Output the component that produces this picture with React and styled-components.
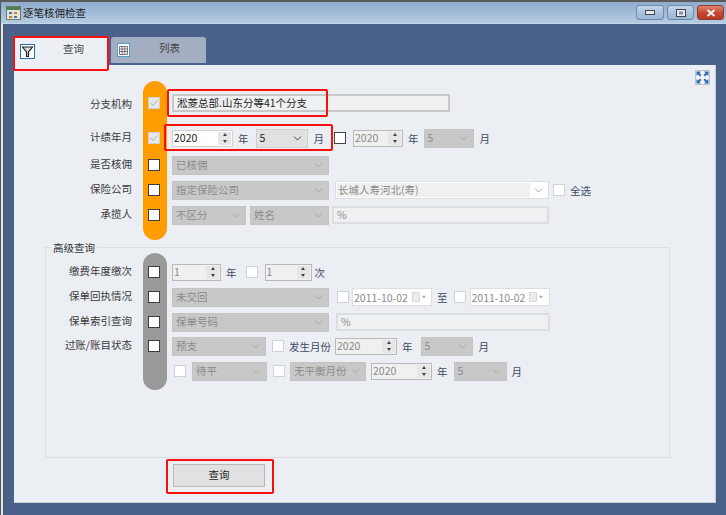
import React from "react";
import styled, { createGlobalStyle } from "styled-components";

const Global = createGlobalStyle`
  html, body { margin: 0; padding: 0; background: #4a628a; }
  * { box-sizing: border-box; }
`;

const Frame = styled.div`
  width: 726px;
  height: 515px;
  display: flex;
  flex-direction: column;
  overflow: hidden;
  position: relative;
  background: #4a628a;
  border-top: 2px solid #5c5c5c;
  border-left: 1px solid #555;
  font-family: "Noto Sans CJK SC", "Liberation Sans", sans-serif;
  font-size: 10.5px;
  color: #333;
`;

const TitleBar = styled.div`
  height: 22px;
  display: flex;
  align-items: center;
  padding: 0 2px 0 5px;
  background: linear-gradient(#8faccc, #b4cbe3);
  border-bottom: 1px solid #c3d6ea;
`;

const TitleText = styled.span`
  margin-left: 2px;
  flex: 1;
  color: #222;
  line-height: 20px;
`;

const WinButton = styled.div`
  width: ${(p) => p.$w}px;
  height: 15px;
  margin-left: 3px;
  display: flex;
  align-items: center;
  justify-content: center;
  border: 1px solid ${(p) => (p.$close ? "#8c3a2c" : "#6f89a8")};
  border-radius: 3px;
  background: ${(p) =>
    p.$close
      ? "linear-gradient(#e0856f, #c8452d 55%, #b63a22)"
      : "linear-gradient(#c4d7ea, #a9c2dc 55%, #9ab6d4)"};
`;

const Body = styled.div`
  flex: 1;
  padding: 13px 10px 12px 11px;
  display: flex;
  flex-direction: column;
  border-left: 2px solid #dfe7ef;
  box-shadow: inset 1px 0 #555;
`;

const TabStrip = styled.div`
  display: flex;
  align-items: flex-start;
  height: 28px;
`;

const Tab = styled.div`
  width: 95px;
  height: ${(p) => (p.$active ? 28 : 26)}px;
  margin-left: ${(p) => (p.$active ? 0 : 2)}px;
  display: flex;
  align-items: center;
  padding: 0 0 0 6px;
  border-radius: 3px 3px 0 0;
  background: ${(p) => (p.$active ? "#ecf0f5" : "#a3aec3")};
  color: #444;
`;

const TabLabel = styled.span`
  margin-left: ${(p) => p.$ml}px;
  margin-top: -5px;
`;

const Panel = styled.div`
  flex: 1;
  position: relative;
  background: #ebeef3;
  border-right: 1px solid #c8ccd4;
  border-bottom: 1px solid #c8ccd4;
  padding-top: 26px;
`;

const ExpandBtn = styled.div`
  position: absolute;
  top: 5px;
  right: 5px;
  width: 15px;
  height: 15px;
  background: #f2f4f8;
  border: 1px solid #c4c4c4;
  display: flex;
  align-items: center;
  justify-content: center;
`;

const Pill = styled.div`
  position: absolute;
  left: 129px;
  top: ${(p) => p.$top}px;
  width: 24px;
  height: ${(p) => p.$h}px;
  border-radius: 12px;
  background: ${(p) => p.$color};
`;

const Mark = styled.div`
  position: absolute;
  left: ${(p) => p.$x - 14}px;
  top: ${(p) => p.$y - 65}px;
  width: ${(p) => p.$w}px;
  height: ${(p) => p.$h}px;
  border: 2px solid #fa0f0f;
  border-radius: 2px;
  pointer-events: none;
  z-index: 3;
`;

const Row = styled.div`
  position: relative;
  z-index: 1;
  display: flex;
  align-items: center;
  height: 24px;
  margin-top: ${(p) => p.$mt || 0}px;
`;

const Label = styled.div`
  width: ${(p) => p.$w || 118}px;
  text-align: right;
  color: #3a3a3a;
  white-space: nowrap;
  margin-top: ${(p) => p.$mt ?? -4}px;
`;

const CheckBox = styled.div`
  flex: none;
  width: 12px;
  height: 12px;
  margin-left: ${(p) => p.$ml ?? 16}px;
  margin-right: ${(p) => p.$mr ?? 12}px;
  background: #fff;
  border: 1px solid ${(p) => (p.$dark ? "#444" : "#cfd3d8")};
  display: flex;
  align-items: center;
  justify-content: center;
`;

const LeadCheck = styled(CheckBox)`
  background: ${(p) => (p.$on ? "#e8e8e8" : "#fff")};
  border-color: ${(p) => (p.$on ? "#cfcfcf" : "#3c3c3c")};
`;

const TextField = styled.div`
  flex: none;
  width: ${(p) => p.$w}px;
  height: ${(p) => p.$h || 18}px;
  margin-left: ${(p) => p.$ml || 0}px;
  background: #eff0f1;
  border: 2px solid ${(p) => p.$line || "#dcdfe2"};
  padding-left: 3px;
  color: ${(p) => p.$color || "#8a8a8a"};
  line-height: 13px;
  white-space: nowrap;
`;

const SelectBox = styled.div`
  flex: none;
  position: relative;
  width: ${(p) => p.$w}px;
  height: 19px;
  margin-left: ${(p) => p.$ml || 0}px;
  padding-left: 3px;
  background: ${(p) => (p.$enabled ? "#e1e1e1" : "#c8c8c8")};
  border: 1px solid ${(p) => (p.$enabled ? "#d0d0d0" : "#c4c4c4")};
  color: ${(p) => (p.$enabled ? "#222" : "#8b8b8b")};
  line-height: 16px;
  white-space: nowrap;
`;

const Arrow = styled.svg`
  position: absolute;
  right: 5px;
  top: 5px;
  width: 9px;
  height: 7px;
`;

const Combo = styled.div`
  flex: none;
  position: relative;
  width: ${(p) => p.$w}px;
  height: 18px;
  margin-left: ${(p) => p.$ml || 0}px;
  background: #fff;
  border: 1px solid #dcdfe2;
  padding: 1px 18px 1px 1px;
`;

const ComboInner = styled.div`
  height: 100%;
  background: #f0f0f0;
  color: #8a8a8a;
  line-height: 13px;
  padding-left: 1px;
`;

const SpinWrap = styled.div`
  flex: none;
  display: flex;
  width: ${(p) => p.$w}px;
  height: 17px;
  margin-left: ${(p) => p.$ml || 0}px;
  background: ${(p) => (p.$enabled ? "#fff" : "#f0f0f0")};
  border: 1px solid ${(p) => (p.$enabled ? "#d2d2d2" : "#b9b9b9")};
  color: ${(p) => (p.$enabled ? "#222" : "#8a8a8a")};
  line-height: 14px;
`;

const SpinValue = styled.div`
  flex: 1;
  padding-left: 1px;
`;

const SpinButtons = styled.div`
  width: 13px;
  display: flex;
  flex-direction: column;
  justify-content: space-around;
  align-items: center;
  background: #e6e6e6;
  margin: 1px 1px 1px 0;
`;

const Tri = styled.div`
  width: 0;
  height: 0;
  border-left: 2.5px solid transparent;
  border-right: 2.5px solid transparent;
  border-${(p) => (p.$up ? "bottom" : "top")}: 3px solid #444;
`;

const Unit = styled.span`
  flex: none;
  margin-left: ${(p) => p.$ml || 0}px;
  color: ${(p) => p.$color || "#3d4a63"};
  white-space: nowrap;
`;

const DateBox = styled.div`
  flex: none;
  display: flex;
  align-items: center;
  width: ${(p) => p.$w}px;
  height: 18px;
  margin-left: ${(p) => p.$ml || 0}px;
  background: #fff;
  border: 1px solid #dcdfe2;
  padding-left: 1px;
  color: #8a8a8a;
  white-space: nowrap;
`;

const DateText = styled.span`
  flex: 1;
`;

const Group = styled.div`
  position: relative;
  margin: 20px 45px 0 31px;
  height: 211px;
  border: 1px solid #dadde1;
  padding-top: 12px;
`;

const Legend = styled.div`
  position: absolute;
  top: -8px;
  left: 5px;
  padding: 0 2px;
  background: #ebeef3;
  color: #333;
  line-height: 16px;
`;

const ButtonRow = styled.div`
  display: flex;
  padding-left: 159px;
  margin-top: 6px;
`;

const QueryButton = styled.div`
  width: 92px;
  height: 23px;
  background: #e1e1e1;
  border: 1px solid #b8b8b8;
  text-align: center;
  line-height: 20px;
  color: #222;
`;

const Chevron = () => (
  <Arrow viewBox="0 0 9 7">
    <path d="M1 1.5 L4.5 5 L8 1.5" fill="none" stroke="#a9a9a9" strokeWidth="1" />
  </Arrow>
);

const DarkChevron = () => (
  <Arrow viewBox="0 0 9 7">
    <path d="M1 1.5 L4.5 5 L8 1.5" fill="none" stroke="#444" strokeWidth="1" />
  </Arrow>
);

const Tick = () => (
  <svg width="10" height="10" viewBox="0 0 10 10">
    <path d="M1.5 5 L4 7.5 L8.5 2.5" fill="none" stroke="#c4c4c4" strokeWidth="1.2" />
  </svg>
);

const Select = ({ w, ml, enabled, children }) => (
  <SelectBox $w={w} $ml={ml} $enabled={enabled}>
    {children}
    {enabled ? <DarkChevron /> : <Chevron />}
  </SelectBox>
);

const Spin = ({ w, ml, enabled, value }) => (
  <SpinWrap $w={w} $ml={ml} $enabled={enabled}>
    <SpinValue>{value}</SpinValue>
    <SpinButtons>
      <Tri $up />
      <Tri />
    </SpinButtons>
  </SpinWrap>
);

const DateField = () => (
  <DateBox $w={80}>
    <DateText>2011-10-02</DateText>
    <svg width="29" height="12" viewBox="0 0 29 12">
      <rect x="5.5" y="0.5" width="9" height="11" fill="#ececec" stroke="#d0d0d0" />
      <path d="M17 4.5 H23 L20 8 Z" fill="#b5b5b5" />
    </svg>
  </DateBox>
);

const AppIcon = () => (
  <svg width="15" height="14" viewBox="0 0 15 14">
    <rect x="0.5" y="0.5" width="14" height="13" fill="#e6e6d8" stroke="#6a7a6a" />
    <rect x="1" y="1" width="13" height="3" fill="#4f7f4f" />
    <rect x="3" y="6" width="3" height="2" fill="#4a6fb0" />
    <rect x="8" y="6" width="3" height="2" fill="#b08a3a" />
    <rect x="3" y="10" width="3" height="2" fill="#b08a3a" />
    <rect x="8" y="10" width="3" height="2" fill="#4a6fb0" />
  </svg>
);

const FilterIcon = () => (
  <svg width="15" height="15" viewBox="0 0 15 15">
    <rect x="0.5" y="0.5" width="14" height="14" fill="#fff" stroke="#2b6ea8" />
    <path d="M2.5 3 H12.5 L8.5 8 V12.5 H6.5 V8 Z" fill="#d8d8d8" stroke="#222" strokeWidth="1.2" />
  </svg>
);

const TableIcon = () => (
  <svg width="13" height="14" viewBox="0 0 13 14">
    <rect x="0.5" y="0.5" width="12" height="13" fill="#fff" stroke="#5a9ac8" />
    <path d="M2.5 3.5 H10.5 V11.5 H2.5 Z M2.5 6 H10.5 M2.5 8.5 H10.5 M5.2 3.5 V11.5 M7.8 3.5 V11.5" stroke="#777" strokeWidth="1" fill="none" />
  </svg>
);

const ExpandIcon = () => (
  <svg width="13" height="13" viewBox="0 0 13 13">
    <path d="M0.5 0.5 H5 L3.5 2 L5.5 4 L4 5.5 L2 3.5 L0.5 5 Z" fill="#2f6db5" />
    <path d="M12.5 0.5 H8 L9.5 2 L7.5 4 L9 5.5 L11 3.5 L12.5 5 Z" fill="#2f6db5" />
    <path d="M0.5 12.5 H5 L3.5 11 L5.5 9 L4 7.5 L2 9.5 L0.5 8 Z" fill="#2f6db5" />
    <path d="M12.5 12.5 H8 L9.5 11 L7.5 9 L9 7.5 L11 9.5 L12.5 8 Z" fill="#2f6db5" />
  </svg>
);

export default function App() {
  return (
    <>
      <Global />
      <Frame>
        <TitleBar>
          <AppIcon />
          <TitleText>逐笔核佣检查</TitleText>
          <WinButton $w={28}>
            <svg width="10" height="5" viewBox="0 0 10 5">
              <rect x="0.5" y="0.5" width="9" height="4" fill="#e8e8e8" stroke="#445" />
            </svg>
          </WinButton>
          <WinButton $w={27}>
            <svg width="10" height="8" viewBox="0 0 10 8">
              <rect x="0.5" y="0.5" width="9" height="7" fill="#e8e8e8" stroke="#445" />
              <rect x="3" y="2.5" width="4" height="3" fill="#7c94b0" />
            </svg>
          </WinButton>
          <WinButton $w={27} $close>
            <svg width="10" height="8" viewBox="0 0 10 8">
              <path d="M1.5 1 L8.5 7 M8.5 1 L1.5 7" stroke="#f4f4f4" strokeWidth="2" />
            </svg>
          </WinButton>
        </TitleBar>
        <Body>
          <TabStrip>
            <Tab $active>
              <FilterIcon />
              <TabLabel $ml={28}>查询</TabLabel>
            </Tab>
            <Tab>
              <TableIcon />
              <TabLabel $ml={29}>列表</TabLabel>
            </Tab>
          </TabStrip>
          <Panel>
            <Mark $x={13} $y={36} $w={96} $h={35} />
            <Mark $x={167} $y={89} $w={161} $h={28} />
            <Mark $x={164} $y={124} $w={169} $h={27} />
            <Mark $x={166} $y={459} $w={108} $h={35} />
            <Pill $top={16} $h={159} $color="#ff9c00" />
            <Pill $top={188} $h={137} $color="#999999" />
            <ExpandBtn>
              <ExpandIcon />
            </ExpandBtn>

            <Row>
              <Label $mt={0}>分支机构</Label>
              <LeadCheck $on>
                <Tick />
              </LeadCheck>
              <TextField $w={278} $line="#c8c8c8" $color="#222">
                淞菱总部.山东分等41个分支
              </TextField>
            </Row>
            <Row $mt={11}>
              <Label>计绩年月</Label>
              <LeadCheck $on>
                <Tick />
              </LeadCheck>
              <Spin w={61} enabled value="2020" />
              <Unit $ml={5}>年</Unit>
              <Select w={52} ml={7} enabled>
                5
              </Select>
              <Unit $ml={6}>月</Unit>
              <CheckBox $dark $ml={10} $mr={7} />
              <Spin w={50} value="2020" />
              <Unit $ml={5}>年</Unit>
              <Select w={50} ml={5}>
                5
              </Select>
              <Unit $ml={6}>月</Unit>
            </Row>
            <Row $mt={3}>
              <Label>是否核佣</Label>
              <LeadCheck />
              <Select w={157}>已核佣</Select>
            </Row>
            <Row $mt={1}>
              <Label>保险公司</Label>
              <LeadCheck />
              <Select w={157}>指定保险公司</Select>
              <Combo $w={214} $ml={6}>
                <ComboInner>长城人寿河北(寿)</ComboInner>
                <Chevron />
              </Combo>
              <CheckBox $ml={4} $mr={5} />
              <Unit>全选</Unit>
            </Row>
            <Row $mt={1}>
              <Label>承揽人</Label>
              <LeadCheck />
              <Select w={74}>不区分</Select>
              <Select w={79} ml={4}>
                姓名
              </Select>
              <TextField $w={217} $ml={3}>
                %
              </TextField>
            </Row>

            <Group>
              <Legend>高级查询</Legend>
              <Row>
                <Label $w={86}>缴费年度缴次</Label>
                <LeadCheck />
                <Spin w={49} value="1" />
                <Unit $ml={5}>年</Unit>
                <CheckBox $ml={9} $mr={7} />
                <Spin w={47} value="1" />
                <Unit $ml={3}>次</Unit>
              </Row>
              <Row $mt={1}>
                <Label $w={86}>保单回执情况</Label>
                <LeadCheck />
                <Select w={157}>未交回</Select>
                <CheckBox $ml={8} $mr={3} />
                <DateField />
                <Unit $ml={5}>至</Unit>
                <CheckBox $ml={6} $mr={4} />
                <DateField />
              </Row>
              <Row $mt={1}>
                <Label $w={86}>保单索引查询</Label>
                <LeadCheck />
                <Select w={157}>保单号码</Select>
                <TextField $w={214} $ml={7}>
                  %
                </TextField>
              </Row>
              <Row>
                <Label $w={86}>过账/账目状态</Label>
                <LeadCheck />
                <Select w={94}>预支</Select>
                <CheckBox $ml={6} $mr={5} />
                <Unit>发生月份</Unit>
                <Spin w={62} ml={4} value="2020" />
                <Unit $ml={5}>年</Unit>
                <Select w={52} ml={8}>
                  5
                </Select>
                <Unit $ml={6}>月</Unit>
              </Row>
              <Row $mt={1}>
                <CheckBox $ml={128} $mr={6} />
                <Select w={75}>待平</Select>
                <CheckBox $ml={6} $mr={5} />
                <Select w={76}>无平衡月份</Select>
                <Spin w={61} ml={5} value="2020" />
                <Unit $ml={5}>年</Unit>
                <Select w={53} ml={6}>
                  5
                </Select>
                <Unit $ml={5}>月</Unit>
              </Row>
            </Group>

            <ButtonRow>
              <QueryButton>查询</QueryButton>
            </ButtonRow>
          </Panel>
        </Body>
      </Frame>
    </>
  );
}
